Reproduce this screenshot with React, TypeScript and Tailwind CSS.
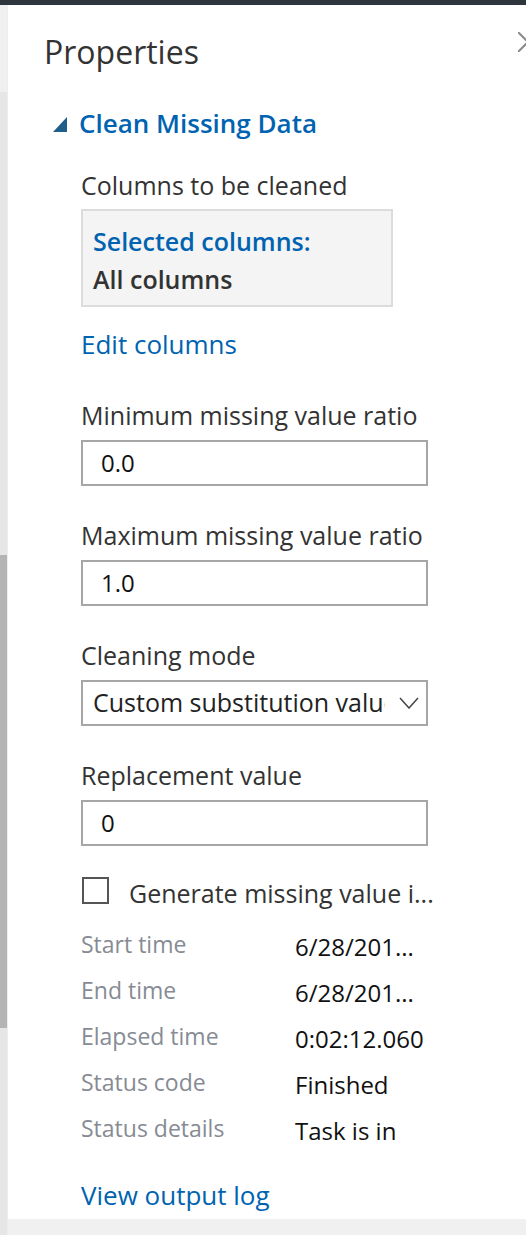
function Field({ label, value }: { label: string; value: string }) {
  return (
    <>
      <div className="mt-[33px] text-[25px] leading-[32px] text-[#333]">{label}</div>
      <div className="mt-[9px] flex h-[46px] w-[347px] items-center border-2 border-[#a6a6a6] pl-[18px] text-[24px] text-[#111]">
        {value}
      </div>
    </>
  );
}

function InfoRow({ label, value }: { label: string; value: string }) {
  return (
    <div className="flex h-[46px]">
      <div className="w-[214px] text-[23px] leading-[40px] text-[#868b94]">{label}</div>
      <div className="text-[24px] leading-[46px] text-[#111]">{value}</div>
    </div>
  );
}

export default function App() {
  return (
    <div className="flex h-[1235px] w-[526px] flex-col overflow-hidden bg-white font-['Open_Sans',sans-serif]">
      <div className="h-[5px] bg-[#2f353c]" />
      <div className="flex flex-1">
        {/* left scroll strip */}
        <div className="flex w-[7px] flex-col">
          <div className="h-[87px] bg-[#f0f0f0]" />
          <div className="h-[463px] bg-[#e6e6e6]" />
          <div className="h-[473px] bg-[#b4b4b4]" />
          <div className="flex-1 bg-[#e6e6e6]" />
        </div>
        <div className="w-px bg-[#ededed]" />

        <div className="relative flex flex-1 flex-col overflow-hidden">
          <svg className="absolute left-[510px] top-[27px]" width="20" height="20" viewBox="0 0 20 20">
            <path d="M0 0 L20 20 M0 20 L20 0" stroke="#8a8a8a" strokeWidth="2" fill="none" />
          </svg>

          <div className="flex-1">
            <div className="mt-[27px] pl-[36px] text-[32px] leading-[40px] text-[#333]">Properties</div>

            <div className="mt-[34px] flex h-[34px] items-center pl-[45px]">
              <svg width="14" height="15" viewBox="0 0 14 15" className="mt-[2px]">
                <path d="M14 0 L14 15 L0 15 Z" fill="#1f5e88" />
              </svg>
              <span className="ml-[12px] text-[26px] font-semibold text-[#0063b1]">Clean Missing Data</span>
            </div>

            <div className="flex flex-col pl-[73px]">
              <div className="mt-[29px] text-[25px] leading-[32px] text-[#333]">Columns to be cleaned</div>
              <div className="mt-[8px] w-[312px] border-2 border-[#dcdcdc] bg-[#f4f4f4] px-[10px] pb-[7px] pt-[11px] text-[25px] font-semibold leading-[38px]">
                <div className="text-[#0063b1]">Selected columns:</div>
                <div className="text-[#333]">All columns</div>
              </div>
              <div className="mt-[20px] text-[26px] leading-[34px] text-[#0063b1]">Edit columns</div>

              <div className="mt-[5px]" />
              <Field label="Minimum missing value ratio" value="0.0" />
              <Field label="Maximum missing value ratio" value="1.0" />

              <div className="mt-[33px] text-[25px] leading-[32px] text-[#333]">Cleaning mode</div>
              <div className="mt-[9px] flex h-[46px] w-[347px] items-center border-2 border-[#a6a6a6] pl-[10px]">
                <div className="w-[292px] overflow-hidden whitespace-nowrap text-[25px] text-[#222]">
                  Custom substitution value
                </div>
                <svg width="20" height="12" viewBox="0 0 20 12" className="ml-[14px]">
                  <path d="M1 1 L10 11 L19 1" stroke="#444" strokeWidth="1.5" fill="none" />
                </svg>
              </div>

              <Field label="Replacement value" value="0" />

              <div className="mt-[31px] flex h-[27px] items-center">
                <div className="ml-px h-[27px] w-[27px] border-2 border-[#555]" />
                <span className="ml-[20px] mt-[6px] whitespace-nowrap text-[25px] text-[#333]">Generate missing value i...</span>
              </div>

              <div className="mt-[20px]">
                <InfoRow label="Start time" value="6/28/201..." />
                <InfoRow label="End time" value="6/28/201..." />
                <InfoRow label="Elapsed time" value="0:02:12.060" />
                <InfoRow label="Status code" value="Finished" />
                <InfoRow label="Status details" value="Task is in" />
              </div>

              <div className="mt-[24px] text-[26px] leading-[34px] text-[#0063b1]">View output log</div>
            </div>
          </div>
          <div className="h-[16px] bg-[#f0f0f0]" />
        </div>
      </div>
    </div>
  );
}
